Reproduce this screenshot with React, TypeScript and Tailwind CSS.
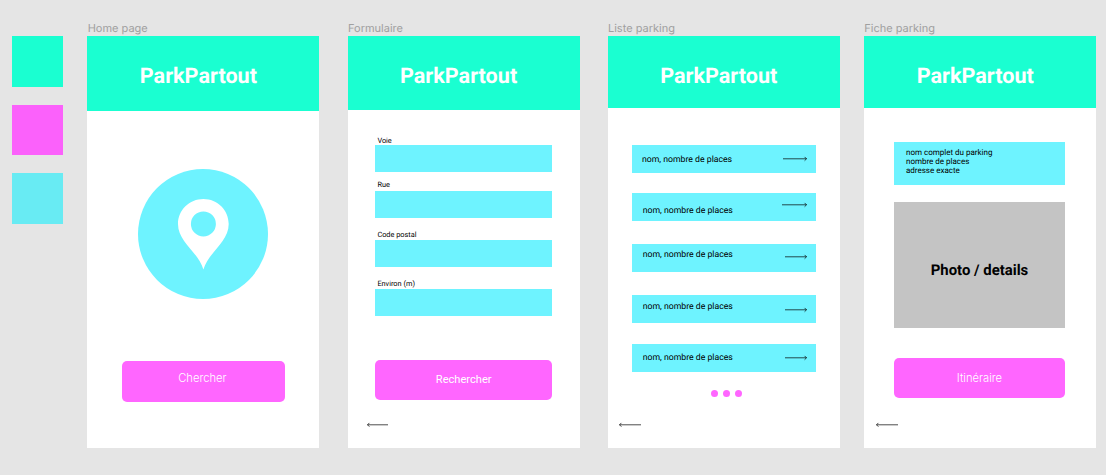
import type { ReactNode } from "react";

function Arrow({ width, left = false, className = "" }: { width: number; left?: boolean; className?: string }) {
  const y = 2.8;
  return (
    <svg
      width={width}
      height={6}
      viewBox={`0 0 ${width} 6`}
      fill="none"
      stroke="currentColor"
      strokeWidth={0.7}
      className={`block shrink-0 ${className}`}
    >
      {left ? (
        <path d={`M${width} ${y}H0.4M2.4 0.9L0.5 ${y}L2.4 4.7`} />
      ) : (
        <path d={`M0 ${y}H${width - 0.4}M${width - 2.4} 0.9L${width - 0.5} ${y}L${width - 2.4} 4.7`} />
      )}
    </svg>
  );
}

function Frame({
  label,
  className,
  headerClass,
  titleClass,
  children,
}: {
  label: string;
  className: string;
  headerClass: string;
  titleClass: string;
  children: ReactNode;
}) {
  return (
    <section className={`flex w-[232px] shrink-0 flex-col pt-[21px] ${className}`}>
      <h2 className="h-[15px] pl-[0.3px] font-[Inter,sans-serif] text-[11px] leading-[15px] font-normal whitespace-nowrap text-[#a0a0a0]">
        {label}
      </h2>
      <div className="flex h-[412px] flex-col bg-white">
        <header className={`shrink-0 bg-[#1affd1] pt-[29px] ${headerClass}`}>
          <h1 className={`text-[21.6px] leading-[24px] font-bold whitespace-nowrap text-white ${titleClass}`}>
            ParkPartout
          </h1>
        </header>
        {children}
      </div>
    </section>
  );
}

const fields = [
  { label: "Voie", className: "mt-[27px]", text: "h-[8px]" },
  { label: "Rue", className: "mt-[8px]", text: "h-[11px] pt-px" },
  { label: "Code postal", className: "mt-[12px]", text: "h-[10px] pt-px" },
  { label: "Environ (m)", className: "mt-[13px]", text: "h-[9px]" },
];

const rows = [
  { box: "mt-[37px]", text: "ml-[10.3px] mt-[10px]", arrow: "mt-[11px]", width: 24 },
  { box: "mt-[20px]", text: "ml-[11px] mt-[13px]", arrow: "mt-[9px]", width: 25 },
  { box: "mt-[23px]", text: "ml-[11px] mt-[6px]", arrow: "mt-[10px]", width: 22 },
  { box: "mt-[23px]", text: "ml-[11px] mt-[7px]", arrow: "mt-[12px]", width: 22 },
  { box: "mt-[21px]", text: "ml-[11px] mt-[9px]", arrow: "mt-[11px]", width: 22 },
];

export default function App() {
  return (
    <main className="flex h-[475px] w-[1106px] overflow-hidden bg-[#e5e5e5] font-[Roboto,sans-serif] text-black [text-rendering:geometricPrecision]">
      <aside className="flex w-[87.4px] shrink-0 flex-col gap-[18px] pt-[36px] pl-[12px]">
        <div className="h-[51px] w-[51px] bg-[#1affd1]" />
        <div className="h-[50px] w-[51px] bg-[#fb61fb]" />
        <div className="h-[51px] w-[51px] bg-[#68ebf3]" />
      </aside>

      <Frame label="Home page" className="" headerClass="h-[75px]" titleClass="pl-[52.4px]">
        <div className="mt-[58px] ml-[50.3px] flex h-[130px] w-[130px] shrink-0 justify-center rounded-full bg-[#6ef3ff] pt-[30px] pl-[1.5px]">
          <svg width="51" height="71" viewBox="0 0 51 71" fill="white" fillRule="evenodd">
            <path d="M25.4 0C39.5 0 50.7 11.1 50.7 25C50.7 43 31 52.5 25.4 70.5C20 52.5 0 43 0 25C0 11.1 11.4 0 25.4 0ZM25.4 12.4A12.5 12.5 0 1 0 25.4 37.4A12.5 12.5 0 1 0 25.4 12.4Z" />
          </svg>
        </div>
        <button className="mt-[62px] ml-[34.6px] flex h-[41px] w-[163px] shrink-0 items-start rounded-[5px] bg-[#ff66ff] pt-[10px] pl-[56.2px] font-[Inter,sans-serif] text-[11.2px] leading-[14px] font-light text-white">
          Chercher
        </button>
      </Frame>

      <Frame label="Formulaire" className="ml-[28.3px]" headerClass="h-[74px]" titleClass="pl-[52.3px]">
        {fields.map((f) => (
          <label key={f.label} className={`ml-[27px] block w-[177px] shrink-0 ${f.className}`}>
            <span className={`block pl-[2.7px] text-[7.35px] leading-[8px] whitespace-nowrap ${f.text}`}>{f.label}</span>
            <span className="block h-[27px] bg-[#6ef3ff]" />
          </label>
        ))}
        <button className="mt-[44px] ml-[27px] h-[40px] w-[177px] shrink-0 rounded-[5px] bg-[#ff66ff] pl-[1px] text-[11.1px] leading-[14px] text-white">
          Rechercher
        </button>
        <Arrow left width={21} className="mt-[22px] ml-[19px]" />
      </Frame>

      <Frame label="Liste parking" className="ml-[28px]" headerClass="h-[72px]" titleClass="pl-[52.5px]">
        {rows.map((r, i) => (
          <div
            key={i}
            className={`ml-[24px] flex h-[28px] w-[184px] shrink-0 items-start justify-between bg-[#6ef3ff] pr-[9px] ${r.box}`}
          >
            <span className={`text-[8.7px] leading-[11px] whitespace-nowrap ${r.text}`}>nom, nombre de places</span>
            <Arrow width={r.width} className={r.arrow} />
          </div>
        ))}
        <div className="mt-[18px] ml-[103px] flex gap-[5px]">
          <span className="h-[7px] w-[7px] rounded-full bg-[#ff66ff]" />
          <span className="h-[7px] w-[7px] rounded-full bg-[#ff66ff]" />
          <span className="h-[7px] w-[7px] rounded-full bg-[#ff66ff]" />
        </div>
        <Arrow left width={22} className="mt-[25px] ml-[11px]" />
      </Frame>

      <Frame label="Fiche parking" className="ml-[24.3px]" headerClass="h-[72px]" titleClass="pl-[52.7px]">
        <p className="mt-[34px] ml-[30px] h-[43px] w-[171px] shrink-0 bg-[#6ef3ff] pt-[5.5px] pl-[12px] text-[8px] leading-[9.3px] whitespace-nowrap">
          nom complet du parking
          <br />
          nombre de places
          <br />
          adresse exacte
        </p>
        <div className="mt-[17px] ml-[30px] flex h-[126px] w-[171px] shrink-0 items-center justify-center bg-[#c4c4c4] pt-[9px] text-[14.9px] leading-[18px] font-bold whitespace-nowrap">
          Photo / details
        </div>
        <button className="mt-[30px] ml-[30px] h-[40px] w-[171px] shrink-0 rounded-[5px] bg-[#ff66ff] font-[Inter,sans-serif] text-[11.2px] leading-[14px] font-light text-white">
          Itinéraire
        </button>
        <Arrow left width={22} className="mt-[24px] ml-[12px]" />
      </Frame>
    </main>
  );
}
